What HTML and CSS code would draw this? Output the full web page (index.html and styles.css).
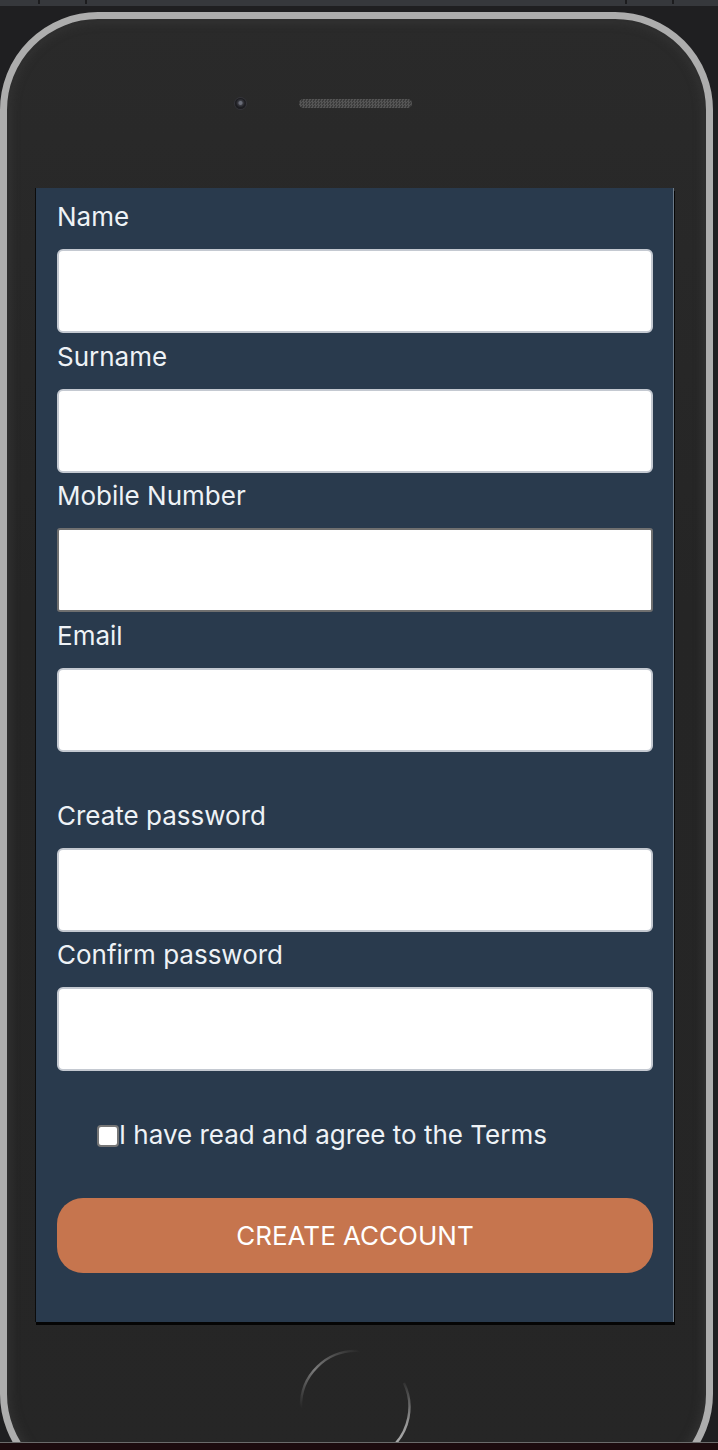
FILE: index.html
```html
<!DOCTYPE html>
<html lang="en">
<head>
<meta charset="utf-8">
<title>Create account</title>
<link rel="stylesheet" href="styles.css">
</head>
<body>
<div class="topbar">
  <span class="tick t1"></span><span class="tick t2"></span><span class="tick t3"></span><span class="tick t4"></span>
</div>
<div class="stage">
  <div class="phone">
    <div class="bezel-top">
      <span class="camera"></span>
      <span class="speaker"></span>
    </div>
    <div class="screen">
      <form class="form">
        <label class="label" for="name">Name</label>
        <input class="field" id="name" type="text">
        <label class="label" for="surname">Surname</label>
        <input class="field" id="surname" type="text">
        <label class="label" for="mobile">Mobile Number</label>
        <input class="field field-plain" id="mobile" type="tel">
        <label class="label" for="email">Email</label>
        <input class="field" id="email" type="email">
        <label class="label label-spaced" for="pw">Create password</label>
        <input class="field" id="pw" type="password">
        <label class="label" for="pw2">Confirm password</label>
        <input class="field" id="pw2" type="password">
        <label class="terms"><input class="check" type="checkbox">I have read and agree to the Terms</label>
        <button class="submit" type="button">CREATE ACCOUNT</button>
      </form>
    </div>
    <div class="bezel-bottom">
      <svg class="home" width="120" height="120" viewBox="0 0 120 120" aria-hidden="true">
        <defs>
          <linearGradient id="ga" x1="0" y1="1" x2="1" y2="0">
            <stop offset="0" stop-color="#8a8a8a" stop-opacity="0"/>
            <stop offset="0.45" stop-color="#8a8a8a" stop-opacity="0.85"/>
            <stop offset="1" stop-color="#8a8a8a" stop-opacity="0"/>
          </linearGradient>
          <linearGradient id="gb" x1="0" y1="0" x2="0" y2="1">
            <stop offset="0" stop-color="#9a9a9a" stop-opacity="0.1"/>
            <stop offset="0.6" stop-color="#a0a0a0" stop-opacity="0.9"/>
            <stop offset="1" stop-color="#b0b0b0" stop-opacity="1"/>
          </linearGradient>
        </defs>
        <path d="M5 62 A55 55 0 0 1 64 5" fill="none" stroke="url(#ga)" stroke-width="2.4"/>
        <path d="M108 37 A55 55 0 0 1 95 102" fill="none" stroke="url(#gb)" stroke-width="2.4"/>
      </svg>
    </div>
  </div>
</div>
<div class="bottombar"></div>
</body>
</html>
```

FILE: styles.css
```css
html, body {
  margin: 0;
  padding: 0;
}
body {
  width: 718px;
  height: 1450px;
  overflow: hidden;
  background: #1f1f21;
  font-family: Inter, "Noto Sans", "Liberation Sans", sans-serif;
}
.topbar {
  height: 6px;
  background: #36383c;
  position: relative;
}
.tick {
  position: absolute;
  top: 0;
  width: 2px;
  height: 4px;
  background: #1c1c1e;
}
.t1 { left: 38px; }
.t2 { left: 85px; }
.t3 { left: 625px; }
.t4 { left: 672px; }

.stage {
  height: 1436px;
  overflow: hidden;
  padding-top: 6px;
  box-sizing: border-box;
}
.phone {
  width: 713px;
  height: 1480px;
  box-sizing: border-box;
  border: 7px solid #adadad;
  border-radius: 98px;
  background: linear-gradient(#2a2a2a, #252525 40%, #262626);
  box-shadow: inset 0 0 0 2px #2e2e2e, inset 0 0 10px 4px rgba(70,70,70,0.35);
  padding: 0 32px 0 28px;
}
.bezel-top {
  height: 169px;
  display: flex;
  align-items: center;
  padding-left: 200px;
}
.camera {
  width: 11px;
  height: 11px;
  border-radius: 50%;
  background: radial-gradient(circle at 50% 45%, #6a6d78 0 1.5px, #3a3b42 2.5px, #1d1d21 4.5px);
  box-shadow: 0 0 0 1px #34343a;
}
.speaker {
  margin-left: 53px;
  width: 113px;
  height: 9px;
  border-radius: 5px;
  background-color: #474747;
  background-image: repeating-conic-gradient(#555 0 25%, #3c3c3c 0 50%);
  background-size: 3px 3px;
  filter: blur(0.4px);
}
.screen {
  width: 639px;
  box-sizing: border-box;
  background: #293a4d;
  border-left: 1px solid #0c0c0c;
  border-right: 1px solid #6c7a88;
  box-shadow: 1px 3px 0 #050505;
  padding: 13px 20px 49px 21px;
}
.form {
  display: flex;
  flex-direction: column;
}
.label {
  display: block;
  color: #eef2f6;
  font-size: 26px;
  line-height: 31px;
  margin-top: 7.5px;
}
.label:first-child {
  margin-top: 0;
}
.label-spaced {
  margin-top: 48px;
}
.field {
  display: block;
  margin: 17px 0 0;
  height: 84px;
  width: 596px;
  box-sizing: border-box;
  background: #fff;
  border: 2px solid #c4c9d1;
  border-radius: 6px;
  padding: 0 10px;
  font-family: inherit;
  font-size: 20px;
  outline: none;
}
.field-plain {
  border-color: #6f6f6f;
  border-radius: 3px;
}
.terms {
  display: flex;
  align-items: center;
  margin-top: 48px;
  padding-left: 40px;
  color: #eef2f6;
  font-size: 26px;
  line-height: 31px;
}
.check {
  appearance: none;
  -webkit-appearance: none;
  margin: 2px 0 0;
  width: 22px;
  height: 22px;
  box-sizing: border-box;
  border: 2px solid #767676;
  border-radius: 4px;
  background: #fff;
  flex: none;
}
.submit {
  margin-top: 48px;
  width: 596px;
  height: 75px;
  border: none;
  border-radius: 26px;
  background: #c6754e;
  color: #fff;
  font-family: inherit;
  font-size: 26px;
  padding: 0;
}
.bezel-bottom {
  display: flex;
  justify-content: center;
  padding-top: 24px;
  padding-left: 2px;
}
.home {
  display: block;
}
.bottombar {
  height: 8px;
  background: #1c0b0e;
  border-top: 1px solid #6b6b6b;
  box-sizing: border-box;
}
```
